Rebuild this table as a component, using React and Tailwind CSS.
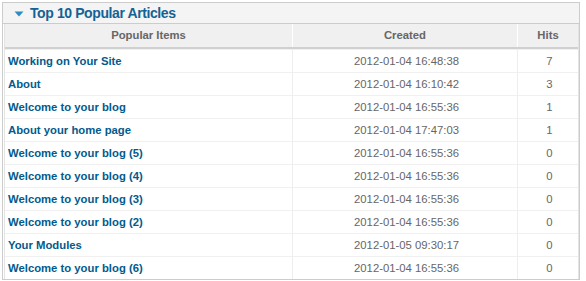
import React from 'react'

const ROWS = [
  { title: 'Working on Your Site', created: '2012-01-04 16:48:38', hits: 7 },
  { title: 'About', created: '2012-01-04 16:10:42', hits: 3 },
  { title: 'Welcome to your blog', created: '2012-01-04 16:55:36', hits: 1 },
  { title: 'About your home page', created: '2012-01-04 17:47:03', hits: 1 },
  { title: 'Welcome to your blog (5)', created: '2012-01-04 16:55:36', hits: 0 },
  { title: 'Welcome to your blog (4)', created: '2012-01-04 16:55:36', hits: 0 },
  { title: 'Welcome to your blog (3)', created: '2012-01-04 16:55:36', hits: 0 },
  { title: 'Welcome to your blog (2)', created: '2012-01-04 16:55:36', hits: 0 },
  { title: 'Your Modules', created: '2012-01-05 09:30:17', hits: 0 },
  { title: 'Welcome to your blog (6)', created: '2012-01-04 16:55:36', hits: 0 },
]

export default function App() {
  return (
    <div
      className="w-[586px] h-[281px] bg-white pt-[2px] pl-[2px]"
      style={{ fontFamily: '"Liberation Sans", Arial, sans-serif' }}
    >
      <div className="w-[578px] h-[278px] border border-[#cccccc] bg-white">
        {/* module title */}
        <div className="h-[21px] bg-[#f4f4f4] border-b border-[#cccccc] flex items-center pl-[11px]">
          <svg width="10" height="6" viewBox="0 0 10 6" className="mr-[6px] mt-[1px]">
            <path d="M0.5 0.5 L9.5 0.5 L5 5.5 Z" fill="#2b8dc6" />
          </svg>
          <h3 className="text-[14px] font-bold tracking-[-0.4px] text-[#146295] leading-none">
            Top 10 Popular Articles
          </h3>
        </div>

        {/* table */}
        <div className="ml-[1px] w-[575px] border-x border-[#e4e4e4]">
          <div className="grid grid-cols-[288px_225px_60px] h-[25px] bg-[#f0f0f0] border-b-2 border-[#d0d0d0] text-[11.3px] font-bold text-[#666666]">
            <div className="flex items-center justify-center border-r border-white">Popular Items</div>
            <div className="flex items-center justify-center border-r border-white">Created</div>
            <div className="flex items-center justify-center">Hits</div>
          </div>
          {ROWS.map((row, i) => (
            <div
              key={i}
              className="grid grid-cols-[288px_225px_60px] h-[23px] border-t border-[#f0f0f0] text-[11.3px]"
            >
              <div className="flex items-center pl-[3px] border-r border-[#eeeeee] font-bold text-[#025a8d]">
                {row.title}
              </div>
              <div className="flex items-center justify-center border-r border-[#eeeeee] text-[#666666] pl-[3px]">
                {row.created}
              </div>
              <div className="flex items-center justify-center text-[#666666] pl-[3px]">{row.hits}</div>
            </div>
          ))}
        </div>
      </div>
    </div>
  )
}
